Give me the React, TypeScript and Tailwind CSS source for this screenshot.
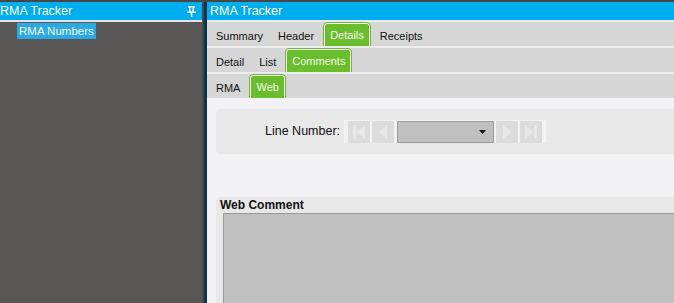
import React from "react";

const font = { fontFamily: '"Liberation Sans", Arial, sans-serif' };

function Tab({ label, active }: { label: string; active?: boolean }) {
  if (active) {
    return (
      <div className="self-end h-[23px] px-[5px] flex items-center rounded-t-[3px] border border-b-0 border-white bg-[#6abd2d] text-[#f4fbe8] outline outline-1 outline-[#6abd2d]">
        {label}
      </div>
    );
  }
  return <div className="px-[5px] flex items-center pt-[4px] text-[#111]">{label}</div>;
}

function TabRow({ tabs, active }: { tabs: string[]; active: string }) {
  return (
    <div className="h-[24px] bg-[#d6d6d6] flex items-stretch pl-[4px] gap-[5px] text-[11px]">
      {tabs.map((t) => (
        <Tab key={t} label={t} active={t === active} />
      ))}
    </div>
  );
}

function NavBtn({ kind }: { kind: "first" | "prev" | "next" | "last" }) {
  return (
    <div className="w-[22px] h-[22px] bg-[#dcdcdc] flex items-center justify-center">
      <svg width="14" height="16" viewBox="0 0 14 16">
        {kind === "first" && (
          <>
            <rect x="1" y="1" width="3" height="14" fill="#e8e8e8" />
            <path d="M13 1 L5 8 L13 15 Z" fill="#e8e8e8" />
          </>
        )}
        {kind === "prev" && <path d="M11 1 L3 8 L11 15 Z" fill="#e8e8e8" />}
        {kind === "next" && <path d="M3 1 L11 8 L3 15 Z" fill="#e8e8e8" />}
        {kind === "last" && (
          <>
            <path d="M1 1 L9 8 L1 15 Z" fill="#e8e8e8" />
            <rect x="10" y="1" width="3" height="14" fill="#e8e8e8" />
          </>
        )}
      </svg>
    </div>
  );
}

export default function App() {
  return (
    <div className="w-[674px] h-[303px] flex flex-col overflow-hidden bg-[#4a4a4a]" style={font}>
      <div className="h-[2px] bg-[#474747]" />
      <div className="flex flex-1 min-h-0">
        {/* left panel */}
        <div className="w-[202px] flex flex-col">
          <div className="h-[18px] bg-[#00adef] flex items-center justify-between text-white text-[12.5px] pr-[6px]">
            <span>RMA Tracker</span>
            <svg width="9" height="11" viewBox="0 0 9 11">
              <rect x="1" y="0" width="7" height="1.5" fill="white" />
              <rect x="2" y="1" width="1.5" height="5" fill="white" />
              <rect x="5.5" y="1" width="1.5" height="5" fill="white" />
              <rect x="0" y="5.5" width="9" height="1.5" fill="white" />
              <rect x="3.8" y="7" width="1.5" height="4" fill="white" />
            </svg>
          </div>
          <div className="h-[2px] bg-[#e4e4e4]" />
          <div className="flex-1 bg-[#585755] pt-[1px] pl-[17px]">
            <div className="w-fit bg-[#2aa9e2] text-[#f0f8ff] text-[11.5px] h-[16px] leading-[16px] px-[2px]">
              RMA Numbers
            </div>
          </div>
        </div>
        {/* divider */}
        <div className="w-[2px] bg-[#4a4a4a]" />
        <div className="w-[3px] bg-[#0a3452]" />
        {/* right panel */}
        <div className="flex-1 flex flex-col bg-[#ececec] min-w-0">
          <div className="h-[18px] bg-[#00adef] flex items-center text-white text-[12.5px] pl-[3px]">
            RMA Tracker
          </div>
          <div className="h-[2px] bg-[#ececec]" />
          <TabRow tabs={["Summary", "Header", "Details", "Receipts"]} active="Details" />
          <div className="h-[2px] bg-[#ececec]" />
          <TabRow tabs={["Detail", "List", "Comments"]} active="Comments" />
          <div className="h-[2px] bg-[#ececec]" />
          <TabRow tabs={["RMA", "Web"]} active="Web" />
          <div className="flex-1 bg-[#f2f2f4] pl-[9px] pt-[11px] flex flex-col">
            <div className="h-[45px] bg-[#e8e8e8] rounded-l-[4px] flex items-center pl-[49px]">
              <span className="text-[12.5px] text-[#111] mr-[4px]">Line Number:</span>
              <div className="bg-[#f2f2f2] h-[23px] flex items-center gap-[2px] px-[4px]">
                <NavBtn kind="first" />
                <NavBtn kind="prev" />
                <div className="ml-[1px] w-[97px] h-[22px] bg-[#c0c0c0] border border-[#9a9a9a] flex items-center justify-end pr-[7px]">
                  <svg width="7" height="4" viewBox="0 0 7 4">
                    <path d="M0 0 L7 0 L3.5 4 Z" fill="#111" />
                  </svg>
                </div>
                <NavBtn kind="next" />
                <NavBtn kind="last" />
              </div>
            </div>
            <div className="mt-[43px] flex-1 bg-[#e8e8e8] rounded-tl-[4px] pl-[4px] flex flex-col">
              <div className="text-[12px] font-bold text-[#111] h-[15px] leading-[15px] mt-[1px]">Web Comment</div>
              <div className="ml-[3px] flex-1 bg-[#c0c0c0] border-t border-l border-[#9a9a9a]" />
            </div>
          </div>
        </div>
      </div>
    </div>
  );
}
